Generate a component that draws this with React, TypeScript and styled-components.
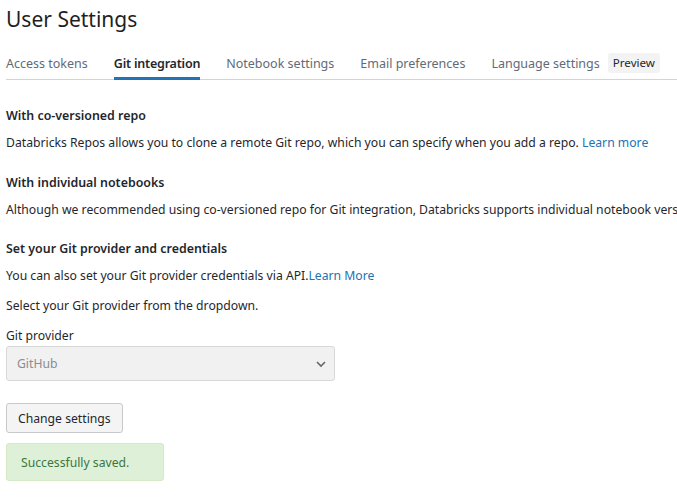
import React from "react";
import styled, { createGlobalStyle } from "styled-components";

const Global = createGlobalStyle`
  html, body { margin: 0; padding: 0; background: #fff; }
  body { font-family: "Noto Sans", "Open Sans", sans-serif; color: #1f272d; }
  * { box-sizing: border-box; }
`;

const Page = styled.div`
  padding: 4px 0 0 6px;
  overflow: hidden;
  width: 677px;
`;

const Title = styled.h1`
  margin: 0;
  font-size: 21px;
  font-weight: 400;
  line-height: 30px;
  color: #1f1f1f;
`;

const Tabs = styled.div`
  display: flex;
  align-items: flex-end;
  gap: 26px;
  margin-top: 14px;
  border-bottom: 1px solid #c8d6e5;
  height: 32px;
`;

const Tab = styled.div<{ $active?: boolean }>`
  display: flex;
  align-items: center;
  gap: 8px;
  height: 32px;
  font-size: 12.5px;
  color: ${(p) => (p.$active ? "#1f272d" : "#5f6b78")};
  font-weight: ${(p) => (p.$active ? 600 : 400)};
  letter-spacing: ${(p) => (p.$active ? "-0.2px" : "0")};
  border-bottom: 3px solid ${(p) => (p.$active ? "#2272b4" : "transparent")};
  margin-bottom: -1px;
  padding-top: 1px;
  white-space: nowrap;
`;

const Badge = styled.span`
  background: #f3f3f3;
  border-radius: 3px;
  padding: 2px 5px;
  font-size: 11.6px;
  line-height: 16px;
  color: #1f272d;
  font-weight: 400;
`;

const Section = styled.section<{ $gap: number }>`
  margin-top: ${(p) => p.$gap}px;
`;

const Heading = styled.h3`
  margin: 0;
  font-size: 12.4px;
  font-weight: 600;
  line-height: 20px;
`;

const Text = styled.p<{ $gap?: number }>`
  margin: ${(p) => p.$gap ?? 7}px 0 0;
  font-size: 12.2px;
  line-height: 20px;
  white-space: nowrap;
`;

const Link = styled.a`
  color: #2272b4;
  text-decoration: none;
`;

const Label = styled.div`
  margin-top: 10px;
  font-size: 12.2px;
  line-height: 20px;
`;

const SelectBox = styled.div`
  width: 329px;
  height: 35px;
  border: 1px solid #d8d8d8;
  border-radius: 3px;
  background: #f1f1f1;
  display: flex;
  align-items: center;
  justify-content: space-between;
  padding: 0 7px 0 10px;
  font-size: 12.2px;
  color: #8c8c8c;
`;

const Button = styled.button`
  margin-top: 22px;
  display: block;
  height: 30px;
  padding: 0 11px;
  border: 1px solid #c9c9c9;
  border-radius: 3px;
  background: #f4f4f4;
  font-family: inherit;
  font-size: 12.2px;
  color: #1f272d;
`;

const Alert = styled.div`
  margin-top: 10px;
  width: 158px;
  height: 38px;
  border: 1px solid #d6e9c6;
  border-radius: 3px;
  background: #dff0d8;
  color: #3c763d;
  font-size: 12.2px;
  display: flex;
  align-items: center;
  padding-left: 14px;
`;

export default function App() {
  return (
    <Page>
      <Global />
      <Title>User Settings</Title>
      <Tabs>
        <Tab>Access tokens</Tab>
        <Tab $active>Git integration</Tab>
        <Tab>Notebook settings</Tab>
        <Tab>Email preferences</Tab>
        <Tab>
          Language settings<Badge>Preview</Badge>
        </Tab>
      </Tabs>
      <Section $gap={26}>
        <Heading>With co-versioned repo</Heading>
        <Text>
          Databricks Repos allows you to clone a remote Git repo, which you can specify when you add a repo.{" "}
          <Link>Learn more</Link>
        </Text>
      </Section>
      <Section $gap={20}>
        <Heading>With individual notebooks</Heading>
        <Text>
          Although we recommended using co-versioned repo for Git integration, Databricks supports individual notebook version control.
        </Text>
      </Section>
      <Section $gap={19}>
        <Heading>Set your Git provider and credentials</Heading>
        <Text>
          You can also set your Git provider credentials via API.<Link>Learn More</Link>
        </Text>
        <Text $gap={10}>Select your Git provider from the dropdown.</Text>
        <Label>Git provider</Label>
        <SelectBox>
          <span>GitHub</span>
          <svg width="12" height="8" viewBox="0 0 12 8">
            <path d="M2 2l4 4 4-4" fill="none" stroke="#666" strokeWidth="1.6" />
          </svg>
        </SelectBox>
        <Button>Change settings</Button>
        <Alert>Successfully saved.</Alert>
      </Section>
    </Page>
  );
}
